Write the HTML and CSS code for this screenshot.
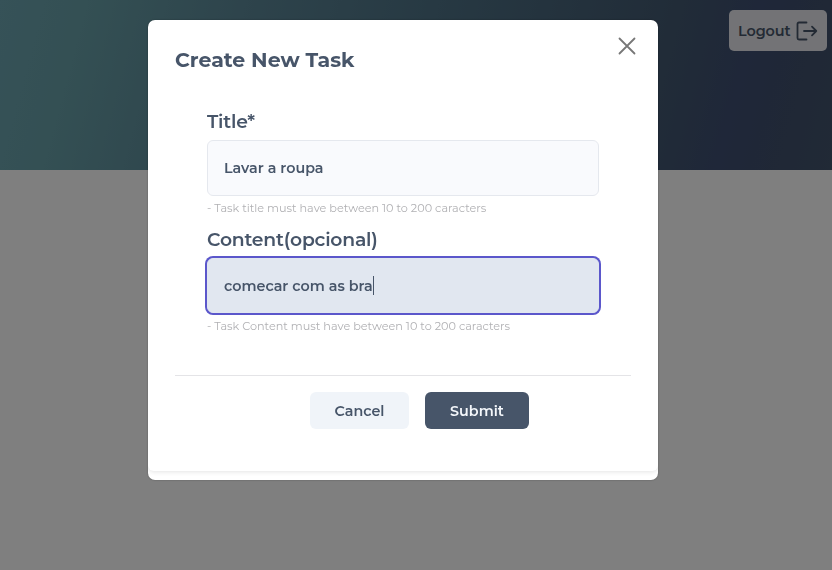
FILE: index.html
```html
<!DOCTYPE html>
<html lang="en">
<head>
<meta charset="utf-8">
<title>Tasks</title>
<link rel="stylesheet" href="styles.css">
</head>
<body>
<header class="banner">
  <button class="logout" type="button"><span>Logout</span>
    <svg class="logout-icon" viewBox="0 0 22 20" fill="none" stroke="currentColor" stroke-width="1.8" stroke-linecap="round" stroke-linejoin="round"><path d="M10.500 1.500H3Q1.500 1.500 1.500 3V17Q1.500 18.500 3 18.500H10.500M8 10H20.300M16 5.700L20.300 10L16 14.300"/></svg>
  </button>
</header>
<div class="overlay">
  <section class="modal" role="dialog" aria-labelledby="heading">
    <div class="panel">
      <div class="panel-head">
        <h1 id="heading">Create New Task</h1>
        <button class="close" type="button" aria-label="Close"><svg viewBox="0 0 18 18" fill="none" stroke="currentColor" stroke-width="1.8" stroke-linecap="round"><path d="M1.500 1.500L16.500 16.500M16.500 1.500L1.500 16.500"/></svg></button>
      </div>
      <form class="form">
        <div class="group">
          <div class="label">Title*</div>
          <div class="field"><span>Lavar a roupa</span></div>
          <div class="hint">- Task title must have between 10 to 200 caracters</div>
        </div>
        <div class="group">
          <div class="label">Content(opcional)</div>
          <div class="field focused"><span>comecar com as bra</span><i class="caret"></i></div>
          <div class="hint">- Task Content must have between 10 to 200 caracters</div>
        </div>
      </form>
      <footer class="actions">
        <button class="btn cancel" type="button">Cancel</button>
        <button class="btn submit" type="button">Submit</button>
      </footer>
    </div>
  </section>
</div>
</body>
</html>
```

FILE: styles.css
```css
* { box-sizing: border-box; }
body {
  margin: 0;
  height: 570px;
  overflow: hidden;
  background: #fff;
  color: #475569;
  font-family: Montserrat, Inter, sans-serif;
}
button { font: inherit; border: 0; padding: 0; }
.banner {
  display: flex;
  justify-content: flex-end;
  align-items: flex-start;
  height: 170px;
  padding: 10px 5px 0 0;
  background: linear-gradient(105deg, #6ca4b0 0%, #68a0a8 10%, #5c8898 28%, #4e7286 50%, #425870 78%, #3e4e72 87%, #40506c 94%, #42546c 100%);
}
.logout {
  display: flex;
  align-items: center;
  justify-content: space-between;
  width: 98px;
  height: 41px;
  padding: 0 9px;
  border-radius: 5px;
  background: #e6e7ec;
  color: #475569;
  font-size: 14.4px;
  font-weight: 600;
  letter-spacing: -.1px;
}
.logout-icon { width: 22px; height: 20px; }
.overlay {
  position: fixed;
  inset: 0;
  padding: 20px 174px 90px 148px;
  background: rgba(0, 0, 0, .5);
}
.modal {
  height: 460px;
  border-radius: 7px;
  background: #fff;
  box-shadow: 0 0 2px rgba(0, 0, 0, .35);
  overflow: hidden;
}
.panel {
  height: 451px;
  padding: 0 27px;
  border-radius: 6px;
  box-shadow: 0 1px 5px rgba(0, 0, 0, .11);
}
.panel-head {
  display: flex;
  justify-content: space-between;
  height: 88px;
  padding-top: 17px;
}
h1 {
  margin: 9px 0 0;
  font-size: 20.5px;
  line-height: 28px;
  font-weight: 700;
  white-space: nowrap;
}
.close {
  display: flex;
  width: 18px;
  height: 18px;
  margin-right: -5px;
  background: none;
  color: #777;
}
.close svg { width: 18px; height: 18px; }
.form { height: 267px; padding: 0 32px; }
.group { height: 118px; }
.label {
  height: 32px;
  font-size: 18.75px;
  line-height: 27px;
  font-weight: 600;
  letter-spacing: -.2px;
}
.field {
  display: flex;
  align-items: center;
  height: 56px;
  padding: 0 16px;
  border: 1px solid #e5e8ee;
  border-radius: 6px;
  background: #f9fafd;
  font-size: 14.3px;
  font-weight: 600;
}
.focused {
  height: 55px;
  margin-bottom: 1px;
  border-color: #e1e7f0;
  background: #e1e7f0;
  box-shadow: 0 0 0 2px #5b57cb;
}
.caret { width: 1px; height: 19px; background: #475569; }
.hint {
  padding-top: 4px;
  font-size: 11.25px;
  line-height: 16px;
  color: #b1b1b4;
  white-space: nowrap;
}
.actions {
  display: flex;
  gap: 16px;
  height: 74px;
  padding: 16px 0 0 135px;
  border-top: 1px solid #e4e4e7;
}
.btn {
  width: 99px;
  height: 37px;
  border-radius: 6px;
  font-size: 14.3px;
  font-weight: 600;
  color: #475569;
}
.cancel { background: #f0f4f9; }
.submit { width: 104px; background: #475569; color: #f4f7fb; }
```
